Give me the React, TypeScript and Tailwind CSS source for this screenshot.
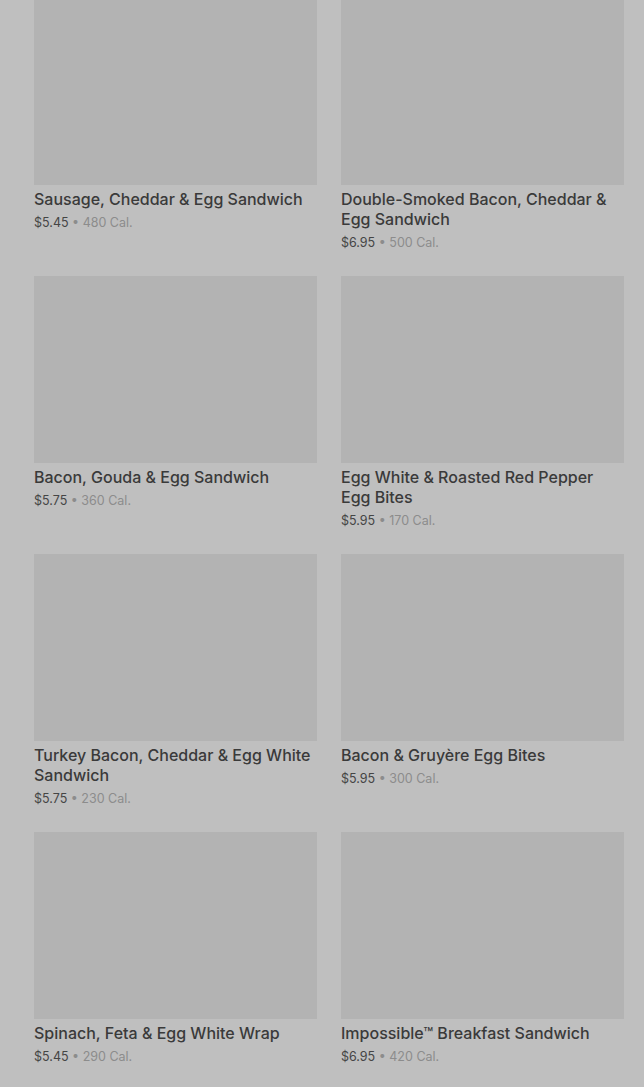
const items = [
  { name: "Sausage, Cheddar & Egg Sandwich", price: "$5.45", cal: "480 Cal." },
  { name: "Double-Smoked Bacon, Cheddar & Egg Sandwich", price: "$6.95", cal: "500 Cal." },
  { name: "Bacon, Gouda & Egg Sandwich", price: "$5.75", cal: "360 Cal." },
  { name: "Egg White & Roasted Red Pepper Egg Bites", price: "$5.95", cal: "170 Cal." },
  { name: "Turkey Bacon, Cheddar & Egg White Sandwich", price: "$5.75", cal: "230 Cal." },
  { name: "Bacon & Gruyère Egg Bites", price: "$5.95", cal: "300 Cal." },
  { name: "Spinach, Feta & Egg White Wrap", price: "$5.45", cal: "290 Cal." },
  { name: "Impossible™ Breakfast Sandwich", price: "$6.95", cal: "420 Cal." },
];

export default function App() {
  return (
    <div
      className="min-h-[1087px] w-full overflow-hidden bg-[#bfbfbf] pl-[34px] pr-[20px]"
      style={{ fontFamily: "Inter, 'Noto Sans', sans-serif" }}
    >
      <div className="-mt-[2px] grid grid-cols-2 gap-x-6 gap-y-[23px]">
        {items.map((item) => (
          <div key={item.name} className="flex flex-col">
            <div className="h-[187px] w-full bg-[#b3b3b3]" />
            <h3 className="mt-1 text-[16px] font-medium leading-5 text-[#3a3a3a]">
              {item.name}
            </h3>
            <p className="mt-1 text-[12.5px] leading-5 text-[#454545]">
              {item.price}
              <span className="text-[#8c8c8c]"> • {item.cal}</span>
            </p>
          </div>
        ))}
      </div>
    </div>
  );
}
